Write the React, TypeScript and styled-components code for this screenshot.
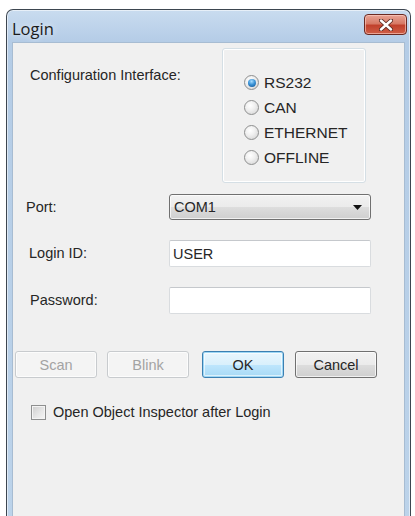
import React, { useState } from "react";
import styled, { createGlobalStyle } from "styled-components";

const GlobalStyle = createGlobalStyle`
  html, body {
    margin: 0;
    padding: 0;
    background: #ffffff;
    overflow: hidden;
  }
  body {
    font-family: "Liberation Sans", Arial, sans-serif;
  }
`;

const Window = styled.div`
  margin: 9px 0 0 6px;
  width: 405px;
  height: 520px;
  box-sizing: border-box;
  border: 1px solid #3d4650;
  border-bottom: none;
  border-radius: 7px 7px 0 0;
  background: linear-gradient(180deg, #c9dcef 0px, #bcd2ea 20px, #b4cce6 32px, #bcd3ea 100%);
  display: flex;
  flex-direction: column;
  box-shadow: inset 0 0 0 1px rgba(255, 255, 255, 0.55);
`;

const TitleBar = styled.div`
  height: 32px;
  display: flex;
  align-items: center;
  justify-content: space-between;
  padding: 0 3px 0 5px;
`;

const Title = styled.span`
  font-family: "Open Sans", "Noto Sans", sans-serif;
  font-size: 16.5px;
  color: #1b1b1b;
  text-shadow: 0 0 6px rgba(255, 255, 255, 0.9);
  margin-top: 4px;
`;

const CloseButton = styled.button`
  width: 43px;
  height: 21px;
  margin-top: -3px;
  padding: 0;
  border: 1px solid #6b2a22;
  border-radius: 4px;
  background: linear-gradient(180deg, #e8a394 0%, #d77a66 45%, #c1412c 55%, #cf5f47 100%);
  box-shadow: inset 0 0 0 1px rgba(255, 210, 200, 0.6);
  display: flex;
  align-items: center;
  justify-content: center;
`;

const Frame = styled.div`
  flex: 1;
  padding: 0 5px;
  display: flex;
`;

const Client = styled.div`
  flex: 1;
  background: #f0f0f0;
  border: 1px solid #a7bcd2;
  border-bottom: none;
  font-size: 14.5px;
  color: #262626;
`;

const ConfigRow = styled.div`
  display: flex;
  margin-top: 5px;
`;

const Label = styled.div<{ $indent: number }>`
  padding-left: ${(p) => p.$indent}px;
  line-height: 17px;
`;

const ConfigLabel = styled(Label)`
  width: 209px;
  box-sizing: border-box;
  margin-top: 19px;
`;

const GroupBox = styled.div`
  width: 144px;
  box-sizing: border-box;
  border: 1px solid #d5dfe5;
  border-radius: 3px;
  box-shadow: inset 0 0 0 1px #ffffff;
  padding: 21px 0 12px 21px;
`;

const RadioRow = styled.label`
  display: flex;
  align-items: center;
  height: 25px;
  gap: 5px;
  font-size: 15.5px;
`;

const RadioCircle = styled.span<{ $checked: boolean }>`
  width: 15px;
  height: 15px;
  box-sizing: border-box;
  border-radius: 50%;
  border: 1px solid #8e8f8f;
  background: radial-gradient(circle at 40% 35%, #ffffff 0%, #f0f0f0 40%, #cfcfcf 100%);
  display: flex;
  align-items: center;
  justify-content: center;

  &::after {
    content: "";
    display: ${(p) => (p.$checked ? "block" : "none")};
    width: 8px;
    height: 8px;
    border-radius: 50%;
    background: radial-gradient(circle at 45% 30%, #a6dcff 0%, #3b93d6 45%, #0f4f8e 100%);
  }
`;

const FieldRow = styled.div<{ $gap: number }>`
  display: flex;
  align-items: center;
  margin-top: ${(p) => p.$gap}px;
`;

const FieldLabel = styled(Label)`
  width: 156px;
  box-sizing: border-box;
`;

const Combo = styled.div`
  width: 202px;
  height: 26px;
  box-sizing: border-box;
  border: 1px solid #707070;
  border-radius: 3px;
  background: linear-gradient(180deg, #f2f2f2 0%, #ebebeb 50%, #dddddd 51%, #cfcfcf 100%);
  box-shadow: inset 0 0 0 1px rgba(255, 255, 255, 0.7);
  display: flex;
  align-items: center;
  justify-content: space-between;
  padding: 0 8px 0 4px;
`;

const Input = styled.input`
  width: 202px;
  height: 27px;
  box-sizing: border-box;
  border: 1px solid #d9dcdf;
  border-top-color: #c5c8cc;
  border-radius: 2px;
  background: #ffffff;
  font: inherit;
  color: #262626;
  padding: 0 3px;
  outline: none;
`;

const ButtonRow = styled.div`
  display: flex;
  margin: 37px 0 0 2px;
`;

const Button = styled.button<{ $disabled?: boolean; $default?: boolean; $gap: number }>`
  width: 82px;
  height: 27px;
  margin-left: ${(p) => p.$gap}px;
  font: inherit;
  padding: 0;
  border-radius: 3px;
  border: 1px solid ${(p) => (p.$disabled ? "#c8cbce" : p.$default ? "#3c7fb1" : "#707070")};
  color: ${(p) => (p.$disabled ? "#a3a3a3" : "#262626")};
  background: ${(p) =>
    p.$disabled
      ? "#f4f4f4"
      : p.$default
      ? "linear-gradient(180deg, #eaf6fd 0%, #d9f0fc 50%, #bee6fd 51%, #a7d9f5 100%)"
      : "linear-gradient(180deg, #f2f2f2 0%, #ebebeb 50%, #dddddd 51%, #cfcfcf 100%)"};
  box-shadow: ${(p) =>
    p.$default ? "inset 0 0 0 1px #9ed7f5, inset 0 0 0 2px rgba(255,255,255,0.6)" : "inset 0 0 0 1px rgba(255,255,255,0.7)"};
`;

const CheckRow = styled.label`
  display: flex;
  align-items: center;
  gap: 7px;
  margin: 26px 0 0 18px;
`;

const CheckBox = styled.span`
  width: 15px;
  height: 15px;
  box-sizing: border-box;
  border: 1px solid #8e8f8f;
  background: linear-gradient(135deg, #cdcdcd 0%, #e6e6e6 55%, #f6f6f6 100%);
  box-shadow: inset 0 0 0 1px #f4f4f4;
`;

const options = ["RS232", "CAN", "ETHERNET", "OFFLINE"];

export default function App() {
  const [iface, setIface] = useState("RS232");
  const [user, setUser] = useState("USER");
  const [pass, setPass] = useState("");

  return (
    <>
      <GlobalStyle />
      <Window>
        <TitleBar>
          <Title>Login</Title>
          <CloseButton aria-label="Close">
            <svg width="14" height="12" viewBox="0 0 14 12">
              <path d="M2 1.5 L12 10.5 M12 1.5 L2 10.5" stroke="#5a2a22" strokeWidth="4.2" strokeLinecap="round" />
              <path d="M2 1.5 L12 10.5 M12 1.5 L2 10.5" stroke="#ffffff" strokeWidth="2.4" strokeLinecap="round" />
            </svg>
          </CloseButton>
        </TitleBar>
        <Frame>
          <Client>
            <ConfigRow>
              <ConfigLabel $indent={17}>Configuration Interface:</ConfigLabel>
              <GroupBox>
                {options.map((o) => (
                  <RadioRow key={o} onClick={() => setIface(o)}>
                    <RadioCircle $checked={iface === o} />
                    {o}
                  </RadioRow>
                ))}
              </GroupBox>
            </ConfigRow>

            <FieldRow $gap={11}>
              <FieldLabel $indent={13}>Port:</FieldLabel>
              <Combo>
                <span>COM1</span>
                <svg width="9" height="5" viewBox="0 0 9 5">
                  <path d="M0 0 H9 L4.5 5 Z" fill="#111" />
                </svg>
              </Combo>
            </FieldRow>

            <FieldRow $gap={20}>
              <FieldLabel $indent={16}>Login ID:</FieldLabel>
              <Input value={user} onChange={(e) => setUser(e.target.value)} />
            </FieldRow>

            <FieldRow $gap={20}>
              <FieldLabel $indent={17}>Password:</FieldLabel>
              <Input type="password" value={pass} onChange={(e) => setPass(e.target.value)} />
            </FieldRow>

            <ButtonRow>
              <Button $disabled $gap={0}>Scan</Button>
              <Button $disabled $gap={10}>Blink</Button>
              <Button $default $gap={13}>OK</Button>
              <Button $gap={11}>Cancel</Button>
            </ButtonRow>

            <CheckRow>
              <CheckBox />
              Open Object Inspector after Login
            </CheckRow>
          </Client>
        </Frame>
      </Window>
    </>
  );
}
